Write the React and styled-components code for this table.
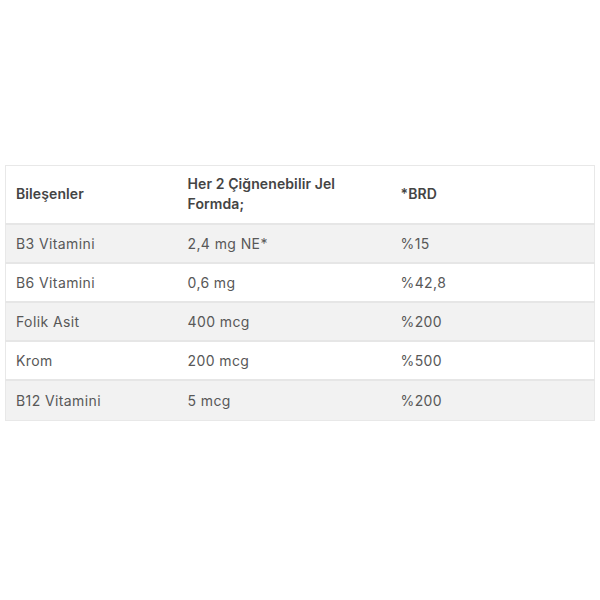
import React from 'react';
import styled, { createGlobalStyle } from 'styled-components';

const GlobalStyle = createGlobalStyle`
  html, body {
    margin: 0;
    padding: 0;
    background: #fff;
  }
  body {
    font-family: Inter, 'Open Sans', sans-serif;
  }
`;

const Page = styled.div`
  width: 600px;
  height: 600px;
  padding: 165px 5px 0;
  box-sizing: border-box;
`;

const Table = styled.table`
  width: 100%;
  border-collapse: collapse;
  table-layout: fixed;
  border: 1px solid #e8e8e8;
`;

const HeadCell = styled.th`
  text-align: left;
  font-weight: 600;
  font-size: 14px;
  line-height: 20px;
  letter-spacing: 0.1px;
  color: #444;
  padding: 8px 10px 9px;
  height: 40px;
  vertical-align: middle;
`;

const Row = styled.tr`
  background: ${(p) => (p.$shade ? '#f2f2f2' : '#fff')};
  border-top: 2px solid #e6e6e6;

  &:last-child td {
    height: 39px;
  }
`;

const Cell = styled.td`
  font-size: 14px;
  letter-spacing: 0.4px;
  color: #585858;
  padding: 0 10px;
  height: 37px;
  line-height: 20px;
  vertical-align: middle;
`;

const rows = [
  ['B3 Vitamini', '2,4 mg NE*', '%15'],
  ['B6 Vitamini', '0,6 mg', '%42,8'],
  ['Folik Asit', '400 mcg', '%200'],
  ['Krom', '200 mcg', '%500'],
  ['B12 Vitamini', '5 mcg', '%200'],
];

const App = () => (
  <>
    <GlobalStyle />
    <Page>
      <Table>
        <colgroup>
          <col style={{ width: 172 }} />
          <col style={{ width: 213 }} />
          <col />
        </colgroup>
        <thead>
          <tr>
            <HeadCell>Bileşenler</HeadCell>
            <HeadCell>Her 2 Çiğnenebilir Jel Formda;</HeadCell>
            <HeadCell>*BRD</HeadCell>
          </tr>
        </thead>
        <tbody>
          {rows.map((r, i) => (
            <Row key={i} $shade={i % 2 === 0}>
              {r.map((c, j) => (
                <Cell key={j}>{c}</Cell>
              ))}
            </Row>
          ))}
        </tbody>
      </Table>
    </Page>
  </>
);

export default App;
